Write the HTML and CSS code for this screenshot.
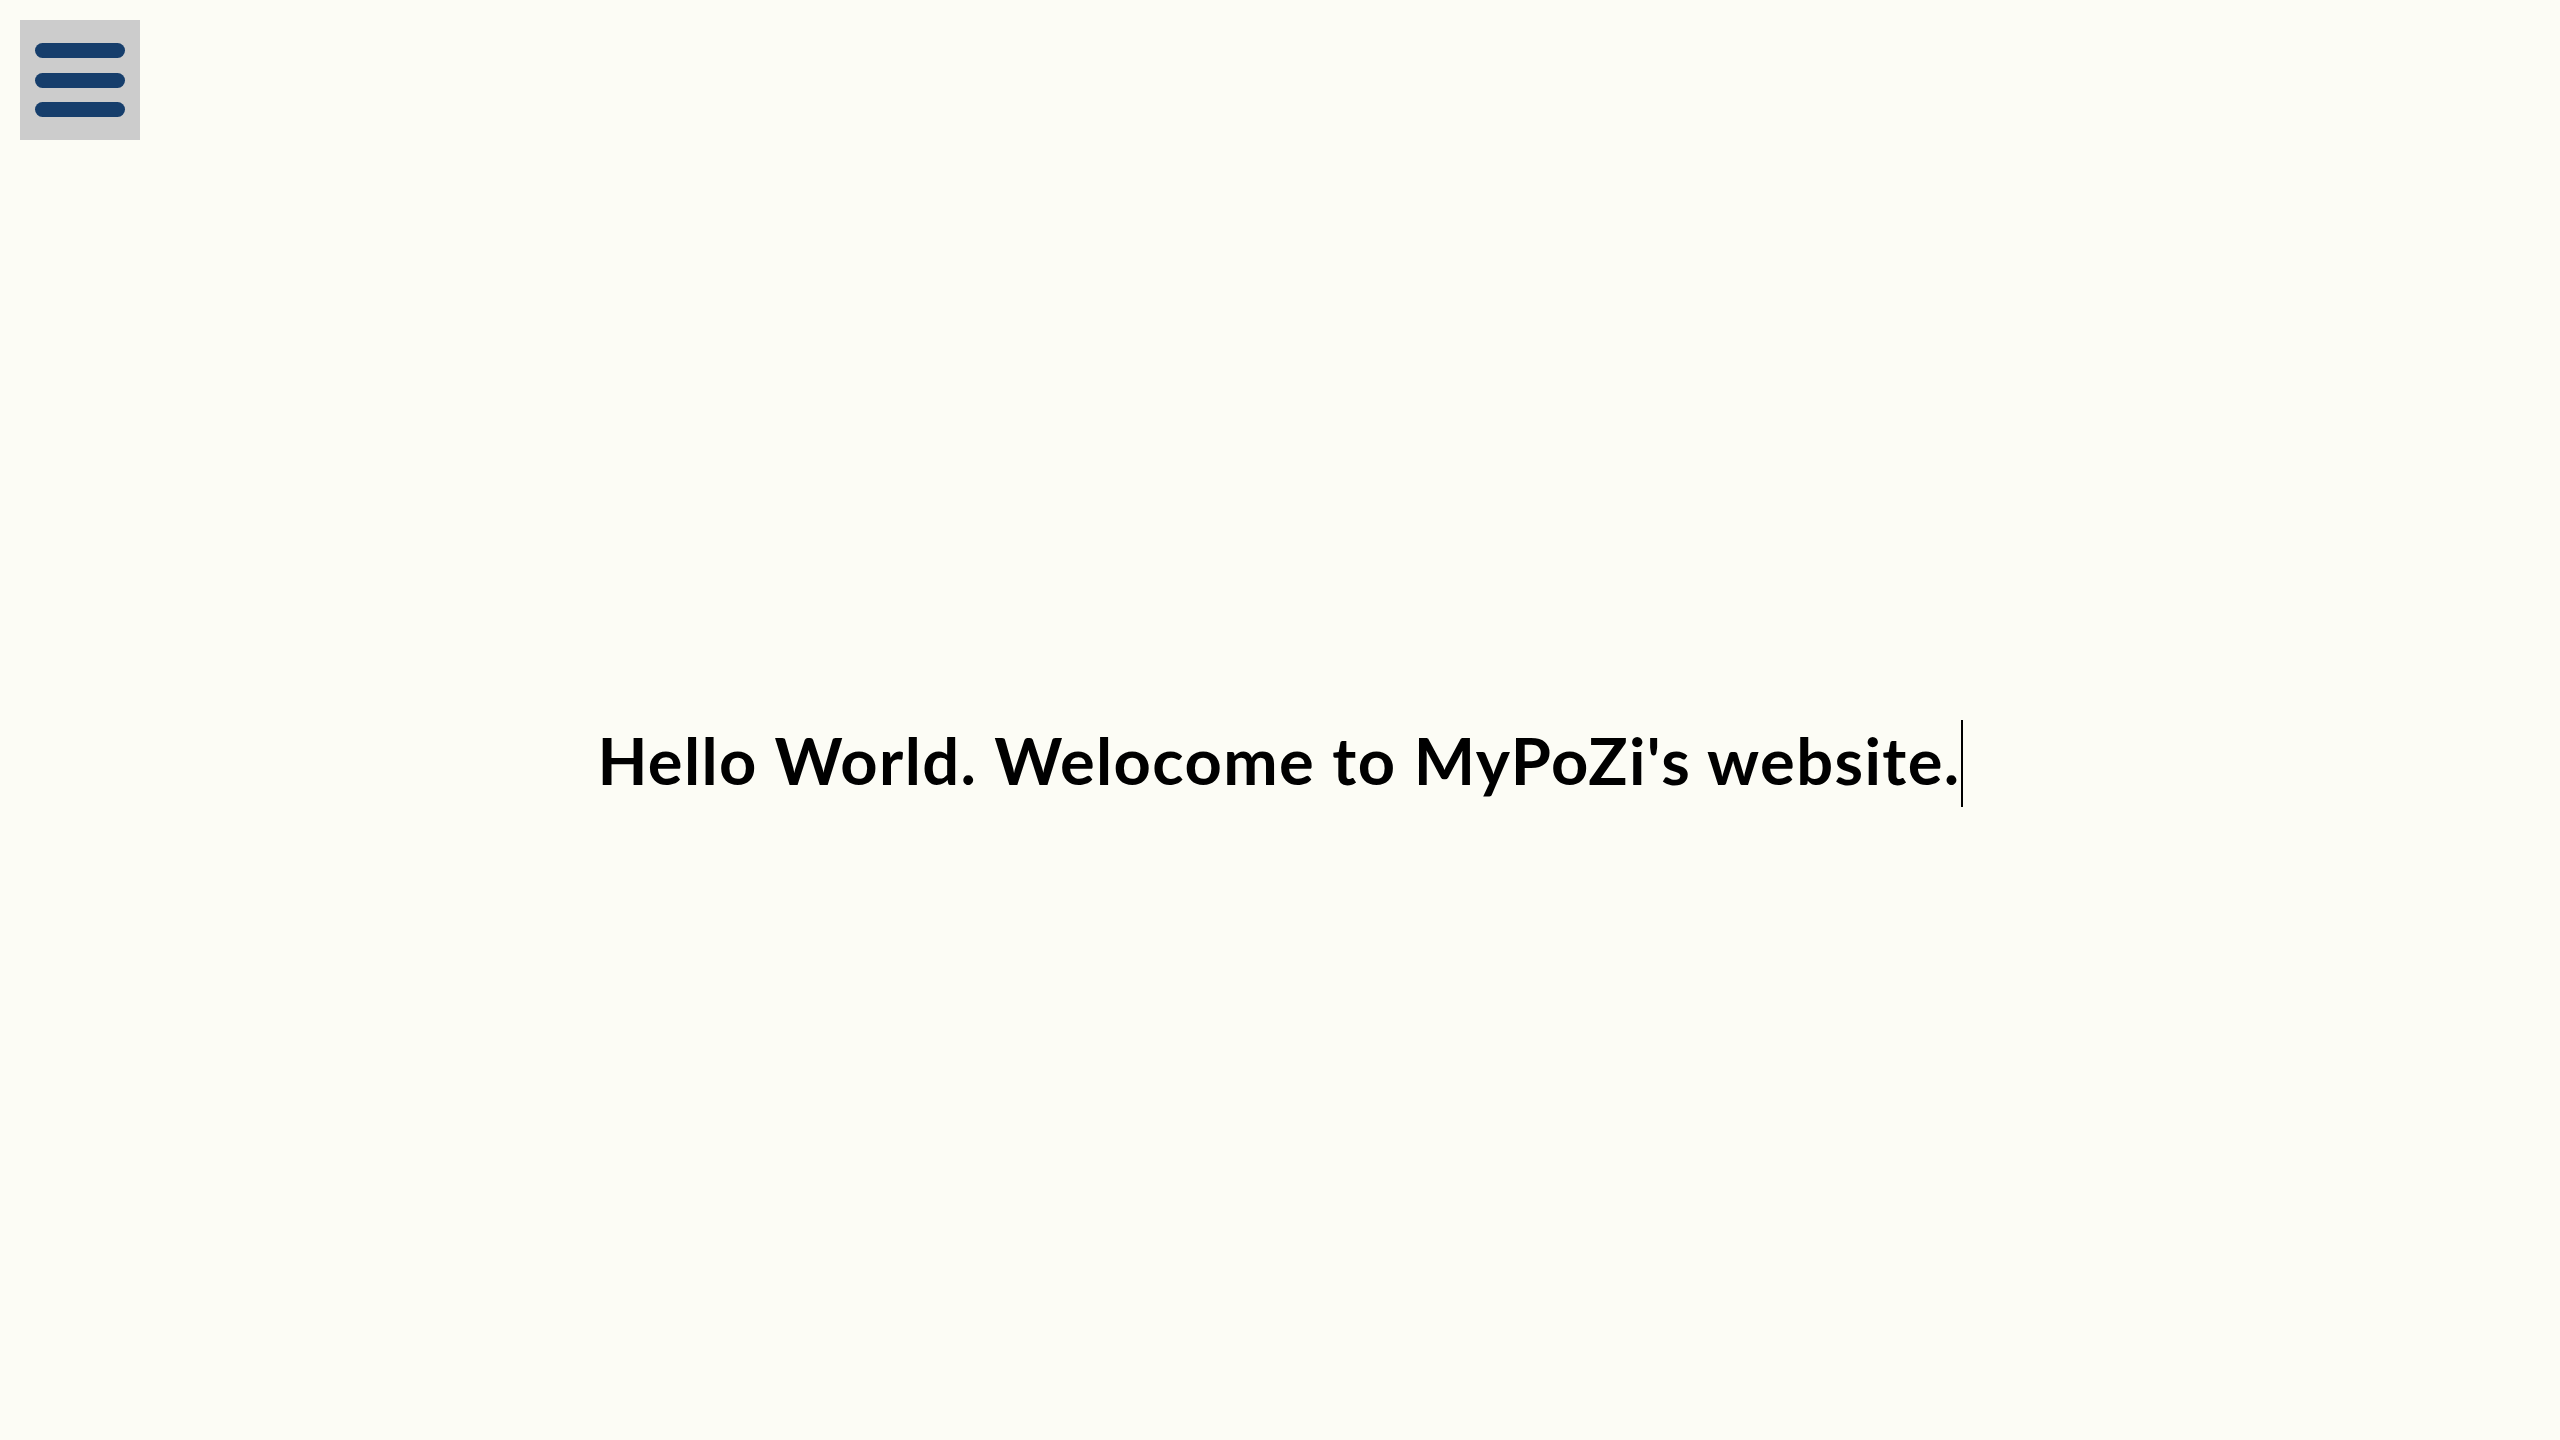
FILE: index.html
```html
<!DOCTYPE html>
<html lang="en">
<head>
<meta charset="utf-8">
<title>MyPoZi</title>
<link rel="stylesheet" href="styles.css">
</head>
<body>
<button class="menu-toggle" aria-label="Menu">
  <span class="bar"></span>
  <span class="bar"></span>
  <span class="bar"></span>
</button>
<main class="hero">
  <h1 class="greeting"><span class="typed">Hello World. Welocome to MyPoZi's website.</span></h1>
</main>
</body>
</html>
```
FILE: styles.css
```css
html, body {
  margin: 0;
  padding: 0;
  background: #fcfcf5;
}
body {
  font-family: "Lato", "Open Sans", sans-serif;
  color: #000;
}
.menu-toggle {
  position: fixed;
  top: 20px;
  left: 20px;
  width: 120px;
  height: 120px;
  padding: 23px 15px;
  box-sizing: border-box;
  border: 0;
  background: #cccccc;
  display: flex;
  flex-direction: column;
  justify-content: space-between;
  align-items: stretch;
  cursor: pointer;
}
.menu-toggle .bar {
  display: block;
  height: 15px;
  border-radius: 8px;
  background: #163e6c;
}
.hero {
  min-height: 100vh;
  box-sizing: border-box;
  padding-top: 87px;
  display: flex;
  align-items: center;
  justify-content: center;
}
.greeting {
  margin: 0;
  font-size: 65px;
  font-weight: 700;
  line-height: 81px;
  letter-spacing: 1.4px;
}
.typed {
  display: inline-block;
  border-right: 2px solid #000;
  padding-right: 0;
  padding-bottom: 6px;
  white-space: nowrap;
}
```
